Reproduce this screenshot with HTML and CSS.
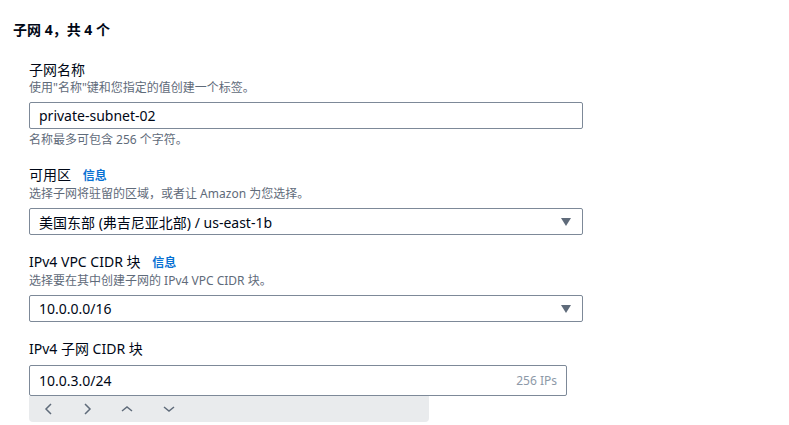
FILE: index.html
```html
<!DOCTYPE html>
<html lang="zh-CN">
<head>
    <meta charset="UTF-8">
    <meta name="viewport" content="width=device-width, initial-scale=1.0">
    <title>子网设置</title>
    <link rel="stylesheet" href="styles.css">
</head>
<body>
    <div class="panel">
        <h2 class="title">子网 4，共 4 个</h2>

        <div class="fields">
            <div class="field">
                <label class="label">子网名称</label>
                <p class="desc">使用"名称"键和您指定的值创建一个标签。</p>
                <div class="input wide"><span>private-subnet-02</span></div>
                <p class="constraint">名称最多可包含 256 个字符。</p>
            </div>

            <div class="field">
                <label class="label">可用区 <a href="#" class="info">信息</a></label>
                <p class="desc">选择子网将驻留的区域，或者让 Amazon 为您选择。</p>
                <div class="input wide select">
                    <span>美国东部 (弗吉尼亚北部) / us-east-1b</span>
                    <svg class="caret" width="10" height="8" viewBox="0 0 10 8"><path d="M0 0h10L5 8z" fill="#5f6b7a"/></svg>
                </div>
            </div>

            <div class="field">
                <label class="label">IPv4 VPC CIDR 块 <a href="#" class="info">信息</a></label>
                <p class="desc">选择要在其中创建子网的 IPv4 VPC CIDR 块。</p>
                <div class="input wide select">
                    <span>10.0.0.0/16</span>
                    <svg class="caret" width="10" height="8" viewBox="0 0 10 8"><path d="M0 0h10L5 8z" fill="#5f6b7a"/></svg>
                </div>
            </div>

            <div class="field">
                <label class="label">IPv4 子网 CIDR 块</label>
                <div class="cidr">
                    <div class="input tall"><span>10.0.3.0/24</span><span class="count">256 IPs</span></div>
                    <div class="stepper">
                        <svg width="10" height="14" viewBox="0 0 10 14"><path d="M7 2 2 7l5 5" fill="none" stroke="#5f6b7a" stroke-width="1.5"/></svg>
                        <svg width="10" height="14" viewBox="0 0 10 14"><path d="M3 2l5 5-5 5" fill="none" stroke="#5f6b7a" stroke-width="1.5"/></svg>
                        <svg width="14" height="14" viewBox="0 0 14 14"><path d="M2 9l5-4 5 4" fill="none" stroke="#5f6b7a" stroke-width="1.5"/></svg>
                        <svg width="14" height="14" viewBox="0 0 14 14"><path d="M2 5l5 4 5-4" fill="none" stroke="#5f6b7a" stroke-width="1.5"/></svg>
                    </div>
                </div>
            </div>
        </div>
    </div>
</body>
</html>
```

FILE: styles.css
```css
*{
    margin: 0;
    padding: 0;
    box-sizing: border-box;
}
body{
    background: #fff;
    color: #000716;
    font-family: "Noto Sans", "Noto Sans CJK SC", sans-serif;
}
.panel{
    padding: 20px 0 0 13px;
}
.title{
    font-size: 14px;
    font-weight: 700;
    line-height: 20px;
}
.fields{
    padding: 20px 0 0 16px;
    display: flex;
    flex-direction: column;
    gap: 17px;
}
.field{
    display: flex;
    flex-direction: column;
}
.label{
    font-size: 14px;
    line-height: 20px;
}
.info{
    color: #0972d3;
    font-size: 12px;
    font-weight: 700;
    text-decoration: none;
    margin-left: 8px;
}
.desc, .constraint{
    font-size: 12px;
    line-height: 16px;
    color: #5f6b7a;
}
.desc{
    margin-bottom: 6px;
}
.constraint{
    margin-top: 3px;
}
.input{
    display: flex;
    align-items: center;
    justify-content: space-between;
    border: 1px solid #7d8998;
    border-radius: 2px;
    padding: 0 9px;
    font-size: 14px;
    height: 27px;
}
.wide{
    width: 554px;
}
.select{
    padding-right: 11px;
}
.cidr{
    margin-top: 6px;
    width: 538px;
}
.tall{
    height: 31px;
}
.count{
    font-size: 12px;
    color: #8d99a8;
}
.stepper{
    width: 400px;
    height: 26px;
    background: #e9ebed;
    border-radius: 0 0 4px 4px;
    display: flex;
    align-items: center;
    gap: 28px;
    padding-left: 15px;
}
```
